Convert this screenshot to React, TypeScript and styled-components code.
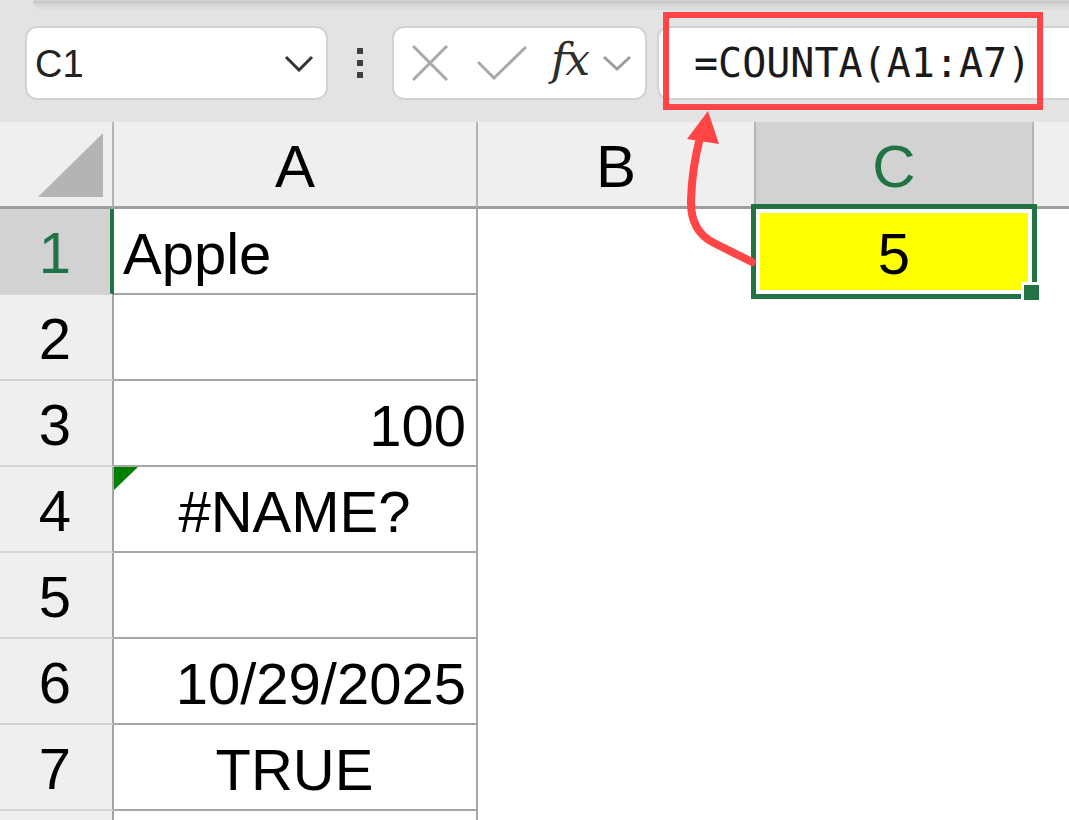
import styled, { createGlobalStyle } from "styled-components";

const GlobalStyle = createGlobalStyle`
  html, body {
    margin: 0;
    padding: 0;
    background: #ffffff;
    overflow: hidden;
  }
  * {
    box-sizing: border-box;
  }
`;

type Align = "left" | "center" | "right";

const rows: { value: string; align: Align; error?: boolean }[] = [
  { value: "Apple", align: "left" },
  { value: "", align: "left" },
  { value: "100", align: "right" },
  { value: "#NAME?", align: "center", error: true },
  { value: "", align: "left" },
  { value: "10/29/2025", align: "right" },
  { value: "TRUE", align: "center" },
  { value: "", align: "left" },
];

const columns = ["A", "B", "C", "D"];
const activeCol = "C";
const activeRow = 1;

export default function App() {
  return (
    <Page>
      <GlobalStyle />
      <Toolbar>
        <RibbonEdge />
        <Controls>
          <NameBox>
            <span>C1</span>
            <svg width="30" height="17" viewBox="0 0 30 17">
              <path d="M2 2 L15 15 L28 2" fill="none" stroke="#333" strokeWidth="3" />
            </svg>
          </NameBox>
          <Grip>
            <i />
            <i />
            <i />
          </Grip>
          <FormulaButtons>
            <svg width="36" height="36" viewBox="0 0 36 36">
              <path d="M1 1 L35 35 M35 1 L1 35" stroke="#a9a9a9" strokeWidth="3" />
            </svg>
            <svg width="50" height="34" viewBox="0 0 50 34">
              <path d="M1 16 L17 32 L49 1" fill="none" stroke="#a9a9a9" strokeWidth="3" />
            </svg>
            <Fx>fx</Fx>
            <svg width="30" height="16" viewBox="0 0 30 16">
              <path d="M2 2 L15 14 L28 2" fill="none" stroke="#9c9c9c" strokeWidth="3" />
            </svg>
          </FormulaButtons>
          <FormulaInput>=COUNTA(A1:A7)</FormulaInput>
        </Controls>
      </Toolbar>

      <Sheet>
        <Corner>
          <CornerMark />
        </Corner>
        {columns.map((c) => (
          <ColHeader key={c} $active={c === activeCol} $last={c === "D"}>
            {c !== "D" && c}
          </ColHeader>
        ))}

        {rows.map((r, i) => {
          const n = i + 1;
          return [
            <RowHeader key={`h${n}`} $active={n === activeRow}>
              {n <= 7 ? n : ""}
            </RowHeader>,
            <ACell key={`a${n}`} $align={r.align}>
              {r.error && <ErrorFlag />}
              {r.value}
            </ACell>,
            <Blank key={`b${n}`} />,
            <Blank key={`c${n}`}>
              {n === activeRow && (
                <Selection>
                  5
                  <FillHandle />
                </Selection>
              )}
            </Blank>,
            <Blank key={`d${n}`} />,
          ];
        })}
      </Sheet>

      <Callout />
      <ArrowLayer width="1069" height="820" viewBox="0 0 1069 820">
        <path
          d="M752 262 L714 243 Q690 231 691 200 Q692 168 700 138"
          fill="none"
          stroke="#ff4545"
          strokeWidth="8"
          strokeLinecap="round"
        />
        <polygon points="708,111 687,139 719,144" fill="#ff4545" />
      </ArrowLayer>
    </Page>
  );
}

const Page = styled.div`
  position: relative;
  width: 1069px;
  height: 820px;
  overflow: hidden;
  background: #ffffff;
  font-family: "Liberation Sans", Arial, sans-serif;
`;

const Toolbar = styled.div`
  height: 122px;
  background: #e3e3e3;
  display: flex;
  flex-direction: column;
`;

const RibbonEdge = styled.div`
  height: 10px;
  margin-left: 33px;
  border-bottom-left-radius: 10px;
  background: linear-gradient(#d8d8d8 0px, #c4c4c4 2px, #d6d6d6 4px, #dedede 10px);
`;

const Controls = styled.div`
  display: flex;
  align-items: center;
  margin-top: 16px;
  padding-left: 25px;
  height: 74px;
`;

const NameBox = styled.div`
  width: 303px;
  height: 74px;
  background: #ffffff;
  border: 2px solid #d2d2d2;
  border-radius: 12px;
  display: flex;
  align-items: center;
  justify-content: space-between;
  padding: 0 12px 0 8px;
  font-size: 38px;
  color: #222;

  span {
    padding-top: 2px;
  }
`;

const Grip = styled.div`
  width: 6px;
  margin: 0 29px;
  display: flex;
  flex-direction: column;
  gap: 6px;

  i {
    display: block;
    width: 6px;
    height: 6px;
    background: #404040;
  }
`;

const FormulaButtons = styled.div`
  width: 255px;
  height: 74px;
  background: #ffffff;
  border: 2px solid #d2d2d2;
  border-radius: 12px;
  display: flex;
  align-items: center;
  padding: 0 6px 0 18px;

  svg:nth-of-type(1) {
    margin-right: 29px;
  }
  svg:nth-of-type(3) {
    margin-left: 14px;
  }
`;

const Fx = styled.span`
  margin-left: 24px;
  font-family: "DejaVu Serif", "Liberation Serif", serif;
  font-style: italic;
  font-size: 44px;
  color: #2e2e2e;
  line-height: 1;
  padding-bottom: 6px;
  letter-spacing: -2px;
`;

const FormulaInput = styled.div`
  flex: 1;
  margin-left: 10px;
  margin-right: -20px;
  height: 74px;
  background: #ffffff;
  border: 2px solid #d2d2d2;
  border-radius: 12px;
  display: flex;
  align-items: center;
  padding-left: 35px;
  font-family: "DejaVu Sans Mono", "Liberation Mono", monospace;
  font-size: 40px;
  color: #1a1a1a;
`;

const Sheet = styled.div`
  display: grid;
  grid-template-columns: 114px 364px 278px 278px 1fr;
  grid-template-rows: 87px repeat(8, 86px);
  font-size: 58px;
  color: #000;
`;

const Corner = styled.div`
  background: #efefef;
  border-right: 2px solid #b4b4b4;
  border-bottom: 3px solid #9e9e9e;
  display: flex;
  align-items: flex-end;
  justify-content: flex-end;
  padding: 0 9px 9px 0;
`;

const CornerMark = styled.div`
  width: 65px;
  height: 64px;
  background: #b4b4b4;
  clip-path: polygon(100% 0, 100% 100%, 0 100%);
`;

const ColHeader = styled.div<{ $active?: boolean; $last?: boolean }>`
  background: ${(p) => (p.$active ? "#d2d2d2" : "#efefef")};
  color: ${(p) => (p.$active ? "#217346" : "#000")};
  border-right: ${(p) => (p.$last ? "none" : "2px solid #b4b4b4")};
  border-bottom: 3px solid #9e9e9e;
  display: flex;
  align-items: center;
  justify-content: center;
  font-size: 60px;
  padding-top: 4px;
`;

const RowHeader = styled.div<{ $active?: boolean }>`
  background: ${(p) => (p.$active ? "#d2d2d2" : "#efefef")};
  color: ${(p) => (p.$active ? "#217346" : "#000")};
  border-right: ${(p) => (p.$active ? "4px solid #217346" : "2px solid #a3a3a3")};
  border-bottom: 2px solid #d4d4d4;
  display: flex;
  align-items: center;
  justify-content: center;
  padding: 3px ${(p) => (p.$active ? "0" : "2px")} 0 0;
`;

const ACell = styled.div<{ $align: Align }>`
  position: relative;
  background: #ffffff;
  border-right: 2px solid #a6a6a6;
  border-bottom: 2px solid #a6a6a6;
  display: flex;
  align-items: center;
  justify-content: ${(p) =>
    p.$align === "left" ? "flex-start" : p.$align === "right" ? "flex-end" : "center"};
  padding: 4px 10px 0 9px;
  white-space: nowrap;
`;

const ErrorFlag = styled.span`
  position: absolute;
  top: 0;
  left: 0;
  width: 24px;
  height: 23px;
  background: #008000;
  clip-path: polygon(0 0, 100% 0, 0 100%);
`;

const Blank = styled.div`
  position: relative;
  background: #ffffff;
`;

const Selection = styled.div`
  position: absolute;
  top: -5px;
  left: -5px;
  right: -3px;
  bottom: -4px;
  border: 5px solid #217346;
  background: #ffff00;
  box-shadow: inset 0 0 0 4px #ffffff;
  display: flex;
  align-items: center;
  justify-content: center;
  padding-top: 4px;
  z-index: 2;
`;

const FillHandle = styled.span`
  position: absolute;
  right: -10px;
  bottom: -9px;
  width: 15px;
  height: 15px;
  background: #217346;
  border: 3px solid #ffffff;
  box-sizing: content-box;
`;

const Callout = styled.div`
  position: absolute;
  left: 663px;
  top: 12px;
  width: 380px;
  height: 98px;
  border: 6px solid #ff4545;
  pointer-events: none;
  z-index: 3;
`;

const ArrowLayer = styled.svg`
  position: absolute;
  left: 0;
  top: 0;
  pointer-events: none;
  z-index: 3;
`;
